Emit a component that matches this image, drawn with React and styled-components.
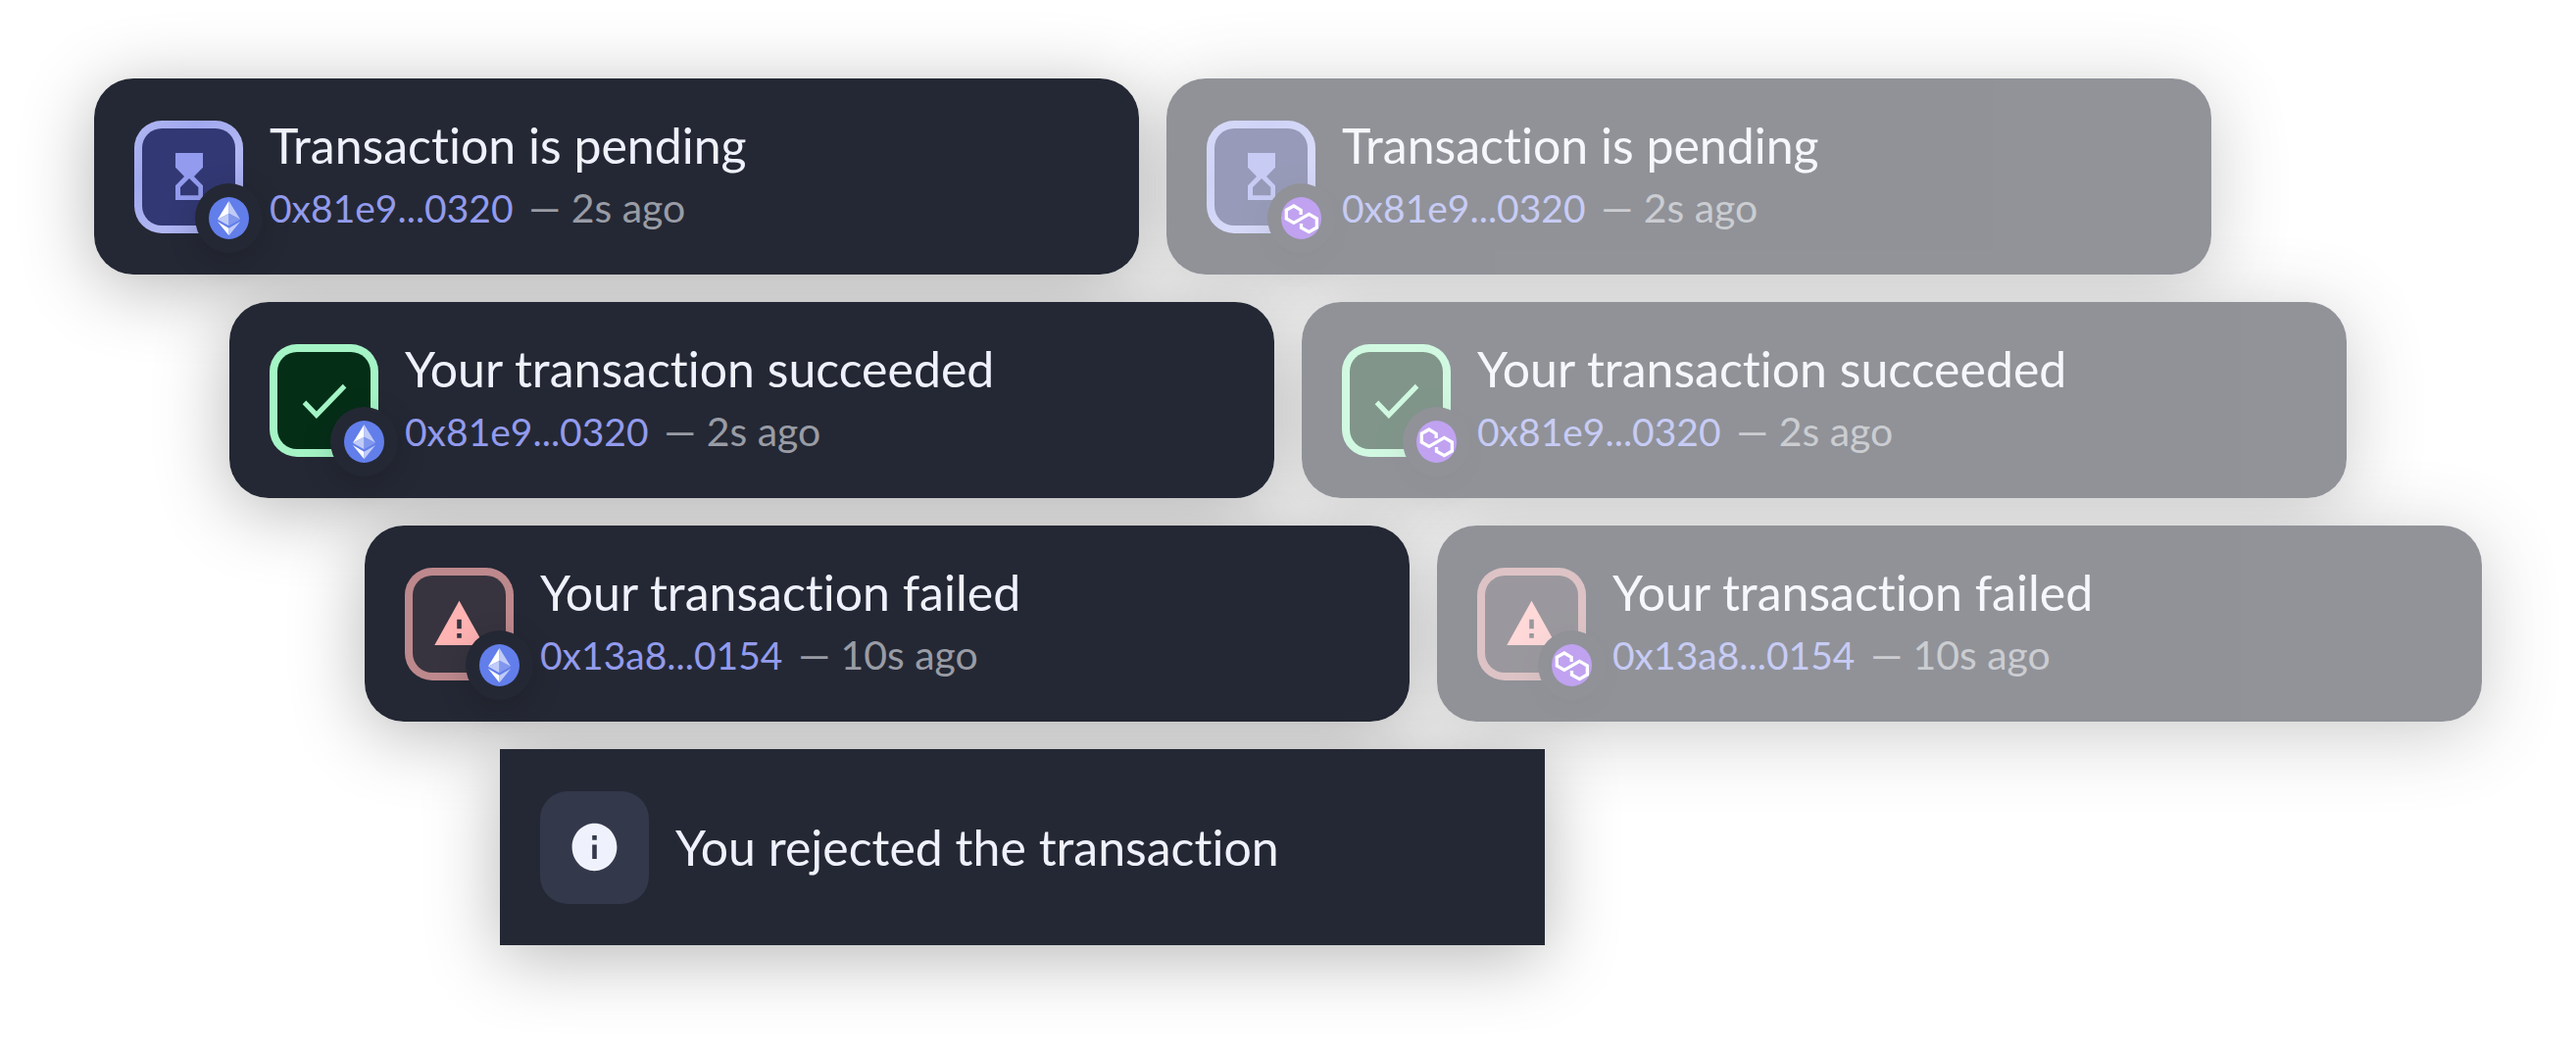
import React from "react";
import styled, { createGlobalStyle } from "styled-components";

const GlobalStyle = createGlobalStyle`
  *, *::before, *::after { box-sizing: border-box; }
  body {
    margin: 0;
    background: #ffffff;
    font-family: Lato, "Liberation Sans", sans-serif;
    font-variant-ligatures: none;
  }
`;

const STEP = 138;

const themes = {
  pending: {
    ring: "linear-gradient(135deg, #b1b7f2, #a0a8f0 30%, #b1b7f2 60%, #9aa2ee)",
    fill: "#323873",
    ink: "#929bed",
  },
  success: { ring: "#a4f4c6", fill: "#052e17", ink: "#a4f4c6" },
  error: { ring: "#bd898d", fill: "#37343f", ink: "#ffb3b3" },
  hint: { fill: "#33384b", ink: "#eff1fc" },
};

const Stage = styled.main`
  position: relative;
  isolation: isolate;
  display: flex;
  flex-direction: column;
  gap: 28px;
  min-height: 100vh;
  padding: 80px 96px 112px;
  overflow: hidden;
`;

const Row = styled.div`
  display: grid;
  grid-template-columns: 1fr 1fr;
  gap: 28px;
  margin-left: ${(p) => p.$index * STEP}px;
  margin-right: ${(p) => (2 - p.$index) * STEP}px;
`;

const Card = styled.article`
  position: relative;
  border-radius: ${(p) => (p.$square ? 0 : 40)}px;
  background: #ffffff;

  &::before {
    content: "";
    position: absolute;
    inset: 0;
    z-index: -1;
    border-radius: inherit;
    box-shadow: 0 12px 76px rgba(0, 0, 0, 0.29);
    opacity: ${(p) => (p.$faded ? 0.7 : 1)};
  }
`;

const Face = styled.div`
  display: flex;
  align-items: center;
  gap: 27px;
  min-height: 200px;
  padding: 0 41px;
  border-radius: inherit;
  background: #242834;
  opacity: ${(p) => (p.$faded ? 0.5 : 1)};
`;

const Tile = styled.div`
  position: relative;
  flex: none;
  width: 111px;
  height: 115px;
  padding: ${(p) => (themes[p.$type].ring ? 8 : 0)}px;
  border-radius: 28px;
  background: ${(p) => themes[p.$type].ring || "none"};
`;

const TileFill = styled.div`
  display: grid;
  place-items: center;
  width: 100%;
  height: 100%;
  border-radius: ${(p) => (themes[p.$type].ring ? 20 : 28)}px;
  background: ${(p) => themes[p.$type].fill};
  color: ${(p) => themes[p.$type].ink};

  svg { display: block; }
`;

const Badge = styled.span`
  position: absolute;
  right: -20px;
  bottom: -20px;
  display: grid;
  place-items: center;
  width: 69px;
  height: 71px;
  border-radius: 50%;
  background: #242834;
  box-shadow: 0 8px 32px rgba(0, 0, 0, 0.16);
`;

const Copy = styled.div`
  display: flex;
  flex-direction: column;
  gap: 4px;
`;

const Title = styled.h2`
  margin: 0;
  font-size: 50px;
  font-weight: 400;
  line-height: 60px;
  color: #eff1fc;
`;

const Meta = styled.p`
  display: flex;
  align-items: baseline;
  gap: 16px;
  margin: 0;
  font-size: 41px;
  line-height: 60px;
  color: #999ca5;
`;

const Hash = styled.a`
  font-size: 39px;
  color: #929bed;
  text-decoration: none;
`;

const Hourglass = () => (
  <svg width="28" height="48" viewBox="0 0 84 144" preserveAspectRatio="none" aria-hidden="true">
    <path
      fill="currentColor"
      fillRule="evenodd"
      d="M0 0H84V44L57 72L84 100V144H0V100L27 72L0 44ZM42 78L15 105V130H70V105Z"
    />
  </svg>
);

const Check = () => (
  <svg width="61" height="63" viewBox="0 0 24 24" preserveAspectRatio="none" aria-hidden="true">
    <path fill="currentColor" d="M9 16.17 4.83 12l-1.42 1.41L9 19 21 7l-1.41-1.41z" />
  </svg>
);

const Warning = () => (
  <svg width="55" height="57" viewBox="0 0 24 24" preserveAspectRatio="none" aria-hidden="true">
    <path fill="currentColor" d="M1 21h22L12 2 1 21zm12-3h-2v-2h2v2zm0-4h-2v-4h2v4z" />
  </svg>
);

const Info = () => (
  <svg width="55" height="58" viewBox="0 0 24 24" preserveAspectRatio="none" aria-hidden="true">
    <path
      fill="currentColor"
      d="M12 2C6.48 2 2 6.48 2 12s4.480 10 10 10 10-4.480 10-10S17.520 2 12 2zm1 15h-2v-6h2v6zm0-8h-2V7h2v2z"
    />
  </svg>
);

const Ethereum = () => (
  <svg width="41" height="43" viewBox="0 0 124 129" preserveAspectRatio="none" role="img" aria-label="Ethereum">
    <ellipse cx="62" cy="64.5" rx="62" ry="64.5" fill="#627eea" />
    <path d="M62 12L27 68L62 50Z" fill="#ffffff" />
    <path d="M62 12L97 68L62 50Z" fill="#c0cbf7" />
    <path d="M27 68L62 50V88Z" fill="#c0cbf7" />
    <path d="M97 68L62 50V88Z" fill="#8197ee" />
    <path d="M27 75L62 95V118Z" fill="#ffffff" />
    <path d="M97 75L62 95V118Z" fill="#c0cbf7" />
  </svg>
);

const Polygon = () => (
  <svg width="41" height="43" viewBox="0 0 124 129" preserveAspectRatio="none" role="img" aria-label="Polygon">
    <ellipse cx="62" cy="64.5" rx="62" ry="64.5" fill="#8247e5" />
    <path
      d="M61 54V40L39 27L16 40V66L39 79L86 52L110 66V93L86 107L62 94V81"
      fill="none"
      stroke="#ffffff"
      strokeWidth="10"
    />
  </svg>
);

const icons = { pending: Hourglass, success: Check, error: Warning, hint: Info };
const chains = { ethereum: Ethereum, polygon: Polygon };

const notices = [
  { type: "pending", title: "Transaction is pending", hash: "0x81e9...0320", age: "2s ago" },
  { type: "success", title: "Your transaction succeeded", hash: "0x81e9...0320", age: "2s ago" },
  { type: "error", title: "Your transaction failed", hash: "0x13a8...0154", age: "10s ago" },
  { type: "hint", title: "You rejected the transaction" },
];

function Notification({ type, title, hash, age, chain, faded }) {
  const Icon = icons[type];
  const Chain = chains[chain];
  return (
    <Card $faded={faded} $square={!hash}>
      <Face $faded={faded}>
        <Tile $type={type}>
          <TileFill $type={type}>
            <Icon />
          </TileFill>
          {hash && (
            <Badge>
              <Chain />
            </Badge>
          )}
        </Tile>
        <Copy>
          <Title>{title}</Title>
          {hash && (
            <Meta>
              <Hash href={`#${hash}`}>{hash}</Hash>
              <span>— {age}</span>
            </Meta>
          )}
        </Copy>
      </Face>
    </Card>
  );
}

export default function App() {
  return (
    <>
      <GlobalStyle />
      <Stage>
        {notices.map((notice, index) => (
          <Row key={notice.type} $index={index}>
            <Notification {...notice} chain="ethereum" />
            {notice.hash && <Notification {...notice} chain="polygon" faded />}
          </Row>
        ))}
      </Stage>
    </>
  );
}
